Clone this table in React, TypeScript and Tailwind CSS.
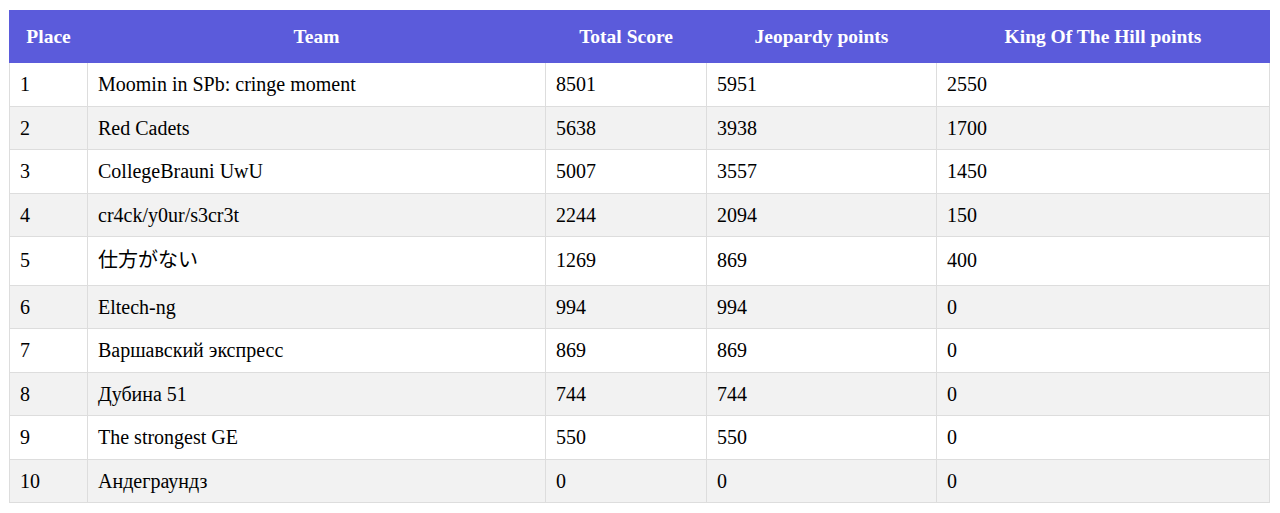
import React from "react";

const rows: [string, string, string, string, string][] = [
  ["1", "Moomin in SPb: cringe moment", "8501", "5951", "2550"],
  ["2", "Red Cadets", "5638", "3938", "1700"],
  ["3", "CollegeBrauni UwU", "5007", "3557", "1450"],
  ["4", "cr4ck/y0ur/s3cr3t", "2244", "2094", "150"],
  ["5", "仕方がない", "1269", "869", "400"],
  ["6", "Eltech-ng", "994", "994", "0"],
  ["7", "Варшавский экспресс", "869", "869", "0"],
  ["8", "Дубина 51", "744", "744", "0"],
  ["9", "The strongest GE", "550", "550", "0"],
  ["10", "Андеграундз", "0", "0", "0"],
];

const headers = ["Place", "Team", "Total Score", "Jeopardy points", "King Of The Hill points"];

export default function App() {
  return (
    <div
      className="bg-white pl-[9px] pr-[11px] pt-[10px] pb-[10px] text-black"
      style={{ fontFamily: '"Liberation Serif", "Noto Sans CJK JP", serif' }}
    >
      <table className="w-[1260px] table-fixed border-collapse text-[20px]">
        <colgroup>
          <col className="w-[78px]" />
          <col className="w-[458px]" />
          <col className="w-[161px]" />
          <col className="w-[230px]" />
          <col className="w-[333px]" />
        </colgroup>
        <thead>
          <tr className="bg-[#5b5bdb]">
            {headers.map((h) => (
              <th
                key={h}
                className="px-[10px] py-[14px] text-center font-bold text-white text-[19.5px] leading-[23px] border border-[#5b5bdb]"
              >
                {h}
              </th>
            ))}
          </tr>
        </thead>
        <tbody>
          {rows.map((r, i) => (
            <tr key={r[0]} className={i % 2 === 1 ? "bg-[#f2f2f2]" : "bg-white"}>
              {r.map((c, j) => (
                <td
                  key={j}
                  className={
                    "border border-[#dddddd] px-[10px] py-[10px] text-left " +
                    (i === 4 ? "leading-[27.5px]" : "leading-[22.5px]")
                  }
                >
                  {c}
                </td>
              ))}
            </tr>
          ))}
        </tbody>
      </table>
    </div>
  );
}
